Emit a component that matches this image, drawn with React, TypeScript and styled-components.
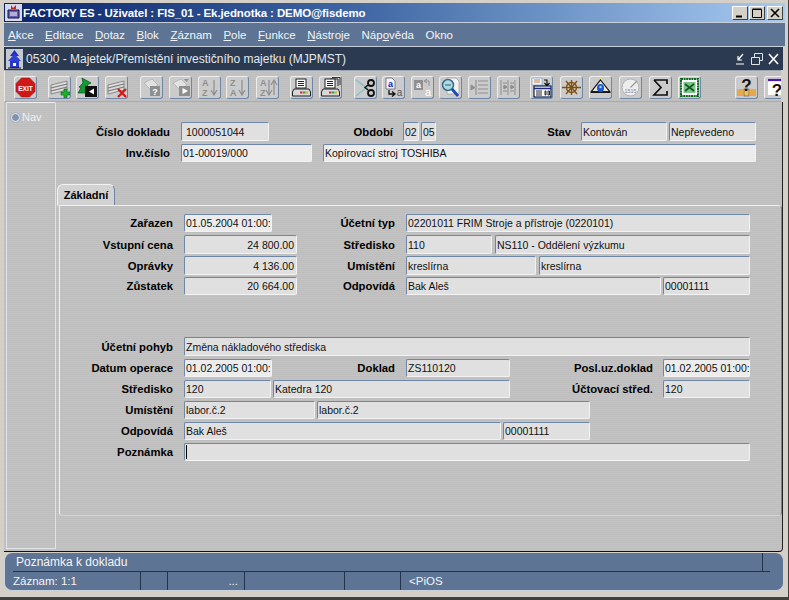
import React from "react";
import styled, { createGlobalStyle } from "styled-components";

const GlobalStyle = createGlobalStyle`
  html, body {
    margin: 0;
    padding: 0;
    background: #d4d0c8;
  }
  * {
    box-sizing: border-box;
  }
`;

const scanlines = `repeating-linear-gradient(0deg, #bebebe 0, #bebebe 1px, #c3c3c3 1px, #c3c3c3 2px)`;

const AppWindow = styled.div`
  width: 789px;
  height: 600px;
  overflow: hidden;
  display: flex;
  flex-direction: column;
  padding: 3px 5px 0 4px;
  background: #d4d0c8;
  border-right: 1px solid #404040;
  border-bottom: 3px solid #404040;
  font-family: "Liberation Sans", Arial, sans-serif;
`;

const TitleBar = styled.div`
  height: 19px;
  margin-right: -2px;
  display: flex;
  align-items: center;
  padding-left: 1px;
  background: linear-gradient(90deg, #0a246a 0%, #3f66a3 45%, #a6caf0 100%);
  flex: none;
`;

const AppIcon = styled.svg`
  width: 17px;
  height: 17px;
  flex: none;
`;

const TitleText = styled.div`
  margin-left: 1px;
  color: #fff;
  font-size: 11.5px;
  font-weight: 700;
  letter-spacing: -0.1px;
  white-space: nowrap;
  flex: 1;
`;

const WinButton = styled.div`
  width: 16px;
  height: 14px;
  margin-right: 1px;
  background: #d4d0c8;
  border: 1px solid;
  border-color: #fff #404040 #404040 #fff;
  display: flex;
  align-items: center;
  justify-content: center;
`;

const MenuBar = styled.div`
  height: 25px;
  margin-right: -2px;
  flex: none;
  display: flex;
  align-items: center;
  padding-left: 4px;
  gap: 11.5px;
  background: #5d7494;
  border-top: 1px solid #c6cfda;
  border-bottom: 1px solid #c6cfda;
`;

const MenuItem = styled.span`
  color: #f2f4f7;
  font-size: 11.5px;
  white-space: nowrap;

  u {
    text-decoration-thickness: 1px;
    text-underline-offset: 1px;
  }
`;

const InnerTitle = styled.div`
  height: 23px;
  flex: none;
  display: flex;
  align-items: center;
  padding-left: 2px;
  background: #2b3a50;
`;

const InnerTitleText = styled.div`
  margin-left: 3px;
  color: #e4e8ee;
  font-size: 12px;
  white-space: nowrap;
  flex: 1;
`;

const InnerControls = styled.svg`
  width: 44px;
  height: 14px;
  margin-right: 4px;
  flex: none;
`;

const Toolbar = styled.div`
  height: 32px;
  width: 777px;
  flex: none;
  display: flex;
  align-items: flex-start;
  padding: 5px 0 0 9px;
  overflow: hidden;
  background: ${scanlines};
  border-left: 1px solid #e6e6e6;
  border-top: 1px solid #9aa4b0;
  border-bottom: 1px solid #9fb0c4;
`;

const ToolButton = styled.div<{ $ml: number }>`
  width: 23px;
  height: 23px;
  flex: none;
  margin-left: ${(p) => p.$ml}px;
  background: #cbcbcb;
  border: 1px solid;
  border-color: #ececec #6e87a6 #6e87a6 #ececec;
  border-radius: 3px;
  display: flex;
  align-items: center;
  justify-content: center;

  svg {
    width: 21px;
    height: 21px;
    display: block;
  }
`;

const Body = styled.div`
  height: 450px;
  flex: none;
  display: flex;
  background: ${scanlines};
  border-bottom: 1px solid #111;
  border-right: 1px solid #222;
  border-bottom-right-radius: 4px;
`;

const NavColumn = styled.div`
  width: 50px;
  height: 447px;
  margin-left: 2px;
  flex: none;
  display: flex;
  align-items: flex-start;
  gap: 2px;
  padding: 8px 0 0 4px;
  border: 1px solid #dfe3e8;
  border-top-color: #eef0f3;
  border-radius: 2px 2px 0 0;
  color: #eef0f2;
  font-size: 11px;
`;

const NavRadio = styled.span`
  width: 9px;
  height: 9px;
  margin-top: 2px;
  border-radius: 50%;
  background: #7f92ae;
  border: 1px solid #e8edf2;
  box-shadow: 0 0 0 1px #a7b3c2;
`;

const Content = styled.div`
  flex: 1;
  display: flex;
  flex-direction: column;
  padding: 20px 0 0 1px;
`;

const Row = styled.div<{ $h: number; $mt: number }>`
  height: ${(p) => p.$h}px;
  margin-top: ${(p) => p.$mt}px;
  flex: none;
  display: flex;
  align-items: stretch;
`;

const Label = styled.div<{ $w: number }>`
  width: ${(p) => p.$w}px;
  flex: none;
  display: flex;
  align-items: center;
  justify-content: flex-end;
  color: #000;
  font-size: 11.3px;
  font-weight: 700;
  white-space: nowrap;
`;

const Field = styled.div<{ $w: number; $ml: number; $right?: boolean; $light?: boolean; $inset?: boolean }>`
  width: ${(p) => p.$w}px;
  margin-left: ${(p) => p.$ml}px;
  flex: none;
  display: flex;
  align-items: center;
  justify-content: ${(p) => (p.$right ? "flex-end" : "flex-start")};
  padding: 0 ${(p) => (p.$right ? 2 : 0)}px 0 ${(p) => (p.$inset ? 4 : 1)}px;
  overflow: hidden;
  background: ${(p) => (p.$light ? "#ececec" : "#e0e0e0")};
  border: 1px solid;
  border-color: #6e87a6 #f2f2f2 #f2f2f2 #6e87a6;
  border-radius: 2px;
  color: #111;
  font-size: 10.5px;
  white-space: nowrap;
`;

const Caret = styled.span`
  width: 1px;
  height: 14px;
  background: #000;
`;

const TabStrip = styled.div`
  margin-top: 22px;
  height: 22px;
  flex: none;
  display: flex;
`;

const Tab = styled.div`
  width: 58px;
  height: 22px;
  display: flex;
  align-items: center;
  justify-content: center;
  background: #d2d2d2;
  border: 1px solid;
  border-color: #f2f2f2 #6e87a6 transparent #f2f2f2;
  border-radius: 6px 6px 0 0;
  font-size: 11px;
  font-weight: 700;
`;

const TabPanel = styled.div`
  width: 723px;
  height: 311px;
  margin-left: 2px;
  margin-top: -1px;
  flex: none;
  padding-top: 8px;
  background: ${scanlines};
  border: 1px solid;
  border-color: #f2f2f2 #6e87a6 #cfd6df #f2f2f2;
  border-radius: 0 4px 4px 4px;
`;

const StatusArea = styled.div`
  height: 38px;
  margin: 1px -1px 0 0;
  flex: none;
  display: flex;
  flex-direction: column;
  padding: 0 13px 0 8px;
  background: #5d7494;
  border: 1px solid #c9d2dd;
  border-top: none;
  border-radius: 8px;
  color: #f3f5f8;
  font-size: 12px;
`;

const HintRow = styled.div`
  height: 19px;
  flex: none;
  display: flex;
  align-items: center;
  justify-content: space-between;
  padding: 0 7px 0 3px;
  border-bottom: 1px solid #24344c;
`;

const HintDivider = styled.span`
  width: 1px;
  height: 18px;
  background: #24344c;
`;

const StatusRow = styled.div`
  height: 18px;
  flex: none;
  font-size: 11.5px;
  display: flex;
`;

const StatusCell = styled.div<{ $w: number; $right?: boolean }>`
  width: ${(p) => p.$w}px;
  flex: none;
  display: flex;
  align-items: center;
  justify-content: ${(p) => (p.$right ? "flex-end" : "flex-start")};
  padding-right: ${(p) => (p.$right ? 6 : 0)}px;
  border-right: 1px solid #24344c;
  white-space: nowrap;
`;

const StatusText = styled.div`
  margin-left: 8px;
  display: flex;
  align-items: center;
`;

const Grey = "#8f8f8f";
const LightGrey = "#e2e2e2";

const Stripes = () => (
  <g>
    <path d="M2 8 L18 4 V13 L2 17 Z" fill="#dcdcdc" stroke="#6a6a6a" strokeWidth="0.7" />
    <path d="M2 11 L18 7 M2 14 L18 10" stroke="#777" strokeWidth="1.2" />
  </g>
);

const SortLetters = ({ a, b }: { a: string; b: string }) => (
  <g fill={Grey} fontFamily="Liberation Sans" fontSize="9" fontWeight="700">
    <text x="3" y="9">{a}</text>
    <text x="3" y="19">{b}</text>
  </g>
);

const DownArrow = ({ x }: { x: number }) => (
  <path d={`M${x} 3 V17 M${x - 3} 13 L${x} 18 L${x + 3} 13`} stroke={Grey} strokeWidth="1.2" fill="none" />
);

const Printer = ({ stack }: { stack?: boolean }) => (
  <g>
    {stack && <path d="M10 2 H18 V9 M12 0.5 H20 V8" fill="none" stroke="#333" strokeWidth="1" />}
    <rect x="5" y="2" width="10" height="9" fill="#fff" stroke="#222" />
    <path d="M7 4.5 H13 M7 6.5 H13 M7 8.5 H13" stroke="#1414b4" />
    <path d="M3 12 H18 L19.5 15 V19 H1.5 V15 Z" fill="#d8d8d8" stroke="#222" />
    <rect x="9" y="14.5" width="2.5" height="2" fill="#d03030" />
    <rect x="12" y="14.5" width="2.5" height="2" fill="#30a040" />
    <rect x="15" y="14.5" width="2" height="2" fill="#d8b020" />
  </g>
);

const Lines = ({ double }: { double?: boolean }) => (
  <g stroke={Grey} fill="none">
    {double ? (
      <>
        <path d="M3 3 V18 M10 3 V18 M17 3 V18" />
        <path d="M5 6 H9 M5 10 H9 M5 14 H9 M12 6 H16 M12 10 H16 M12 14 H16" />
        <path d="M6 8 L9 10 L6 12 Z M13 8 L16 10 L13 12 Z" fill={Grey} />
      </>
    ) : (
      <>
        <path d="M7 3 V18 M9 4 H19 M9 8 H19 M9 12 H19 M9 16 H19" strokeWidth="1.1" />
        <path d="M2 8 L6 10.5 L2 13 Z" fill={Grey} />
      </>
    )}
  </g>
);

type Tool = { ml: number; icon: React.ReactNode };

const tools: Tool[] = [
  {
    ml: 0,
    icon: (
      <g>
        <path d="M6.5 1 H14.5 L20 6.5 V14.5 L14.5 20 H6.5 L1 14.5 V6.5 Z" fill="#d01818" stroke="#9a1010" strokeWidth="0.6" />
        <text x="10.5" y="13.5" textAnchor="middle" fill="#fff" fontFamily="Liberation Sans" fontSize="6.6" fontWeight="700">EXIT</text>
      </g>
    ),
  },
  {
    ml: 11,
    icon: (
      <g>
        <Stripes />
        <path d="M12 15 H15 V12 H18 V15 H21 V18 H18 V21 H15 V18 H12 Z" fill="#20b030" stroke="#0b5a14" strokeWidth="0.6" />
      </g>
    ),
  },
  {
    ml: 5,
    icon: (
      <g>
        <path d="M5 1 L14 6 L10 8 L13 11 L9 12 L11 16 H1 L4 11 L2 10 L6 6 Z" fill="#129a35" stroke="#064d18" strokeWidth="0.7" />
        <rect x="8" y="9" width="12" height="11" fill="#111" />
        <path d="M17 11.5 V17.5 L12 14.5 Z" fill="#fff" />
      </g>
    ),
  },
  {
    ml: 6,
    icon: (
      <g>
        <Stripes />
        <path d="M12 12 L20 20 M20 12 L12 20" stroke="#d81818" strokeWidth="2.4" />
      </g>
    ),
  },
  {
    ml: 12,
    icon: (
      <g>
        <path d="M3 6 L11 2 L17 8 L10 13 Z" fill={LightGrey} stroke="#aaa" strokeWidth="0.7" />
        <rect x="9" y="9" width="10" height="10" fill={Grey} />
        <text x="14" y="17.5" textAnchor="middle" fill="#fff" fontFamily="Liberation Sans" fontSize="9" fontWeight="700">?</text>
      </g>
    ),
  },
  {
    ml: 6,
    icon: (
      <g>
        <path d="M3 6 L11 2 L17 8 L10 13 Z" fill={LightGrey} stroke="#aaa" strokeWidth="0.7" />
        <path d="M14 2 H19 L16.5 5 Z" fill={Grey} />
        <rect x="9" y="9" width="11" height="10" fill={Grey} />
        <path d="M12.5 11 V17 L18 14 Z" fill="#fff" />
      </g>
    ),
  },
  { ml: 6, icon: <g><SortLetters a="A" b="Z" /><DownArrow x={15} /></g> },
  { ml: 5, icon: <g><SortLetters a="Z" b="A" /><DownArrow x={15} /></g> },
  {
    ml: 7,
    icon: (
      <g>
        <SortLetters a="A" b="Z" />
        <DownArrow x={12} />
        <path d="M17 18 V4 M14 8 L17 3 L20 8" stroke={Grey} strokeWidth="1.2" fill="none" />
      </g>
    ),
  },
  { ml: 11, icon: <Printer /> },
  { ml: 6, icon: <Printer stack /> },
  {
    ml: 12,
    icon: (
      <g>
        <path d="M1 3 L13 12 M1 19 L13 9" stroke="#8fc0c8" strokeWidth="1.6" />
        <circle cx="16" cy="6" r="3" fill="none" stroke="#111" strokeWidth="1.8" />
        <circle cx="16" cy="16" r="3" fill="none" stroke="#111" strokeWidth="1.8" />
        <path d="M13 8 L10 10.5 L13 13" stroke="#111" strokeWidth="1.4" fill="none" />
      </g>
    ),
  },
  {
    ml: 5,
    icon: (
      <g>
        <path d="M3 1 H9 L12 4 V12 H3 Z" fill="#f4f4f4" stroke="#555" strokeWidth="0.7" />
        <text x="7.5" y="10" textAnchor="middle" fill="#1414d0" fontFamily="Liberation Sans" fontSize="9" fontWeight="700">a</text>
        <path d="M6 13 V17 H11 M9 14.5 L12 17 L9 19.5" stroke="#111" strokeWidth="1.3" fill="none" />
        <text x="16.5" y="19" textAnchor="middle" fill="#555" fontFamily="Liberation Sans" fontSize="10">a</text>
      </g>
    ),
  },
  {
    ml: 6,
    icon: (
      <g>
        <rect x="2" y="3" width="9" height="10" fill={Grey} />
        <text x="6.5" y="11" textAnchor="middle" fill="#fff" fontFamily="Liberation Sans" fontSize="9" fontWeight="700">a</text>
        <path d="M17 9 V4 H13 M15 2 L12 4 L15 6" stroke={Grey} fill="none" />
        <text x="16" y="19" textAnchor="middle" fill="#fff" fontFamily="Liberation Sans" fontSize="11">a</text>
      </g>
    ),
  },
  {
    ml: 5,
    icon: (
      <g>
        <path d="M7 1 H16 L19 4 V17 H7 Z" fill="#f2f2f2" stroke="#999" strokeWidth="0.7" />
        <circle cx="8" cy="8" r="5.5" fill="#a8dce4" stroke="#3a6a8a" strokeWidth="1.5" />
        <path d="M5 8 H11" stroke="#555" />
        <path d="M12 12 L18 19" stroke="#1a48c0" strokeWidth="2.8" />
      </g>
    ),
  },
  { ml: 6, icon: <Lines /> },
  { ml: 6, icon: <Lines double /> },
  {
    ml: 10,
    icon: (
      <g>
        <rect x="1" y="1" width="10" height="7" fill="#eef4fb" stroke="#8aa0c0" strokeWidth="0.7" />
        <path d="M3 3 H9 M3 5 H9" stroke="#d08040" />
        <path d="M13 3 H16 V8 M13.5 6 L16 9 L18.5 6" stroke="#111" strokeWidth="1.2" fill="none" />
        <rect x="3" y="9" width="17" height="11" fill="#fff" stroke="#10204a" strokeWidth="1.2" />
        <path d="M3 11.5 H20" stroke="#1a2a80" strokeWidth="1.6" />
        <path d="M5 14 H11 M5 16 H11 M5 18 H11 M14 14 H15 V18 H14 Z M17 14 H18.5 V18 H17 Z" stroke="#111" strokeWidth="0.9" fill="none" />
      </g>
    ),
  },
  {
    ml: 7,
    icon: (
      <g stroke="#80500f" fill="none" strokeWidth="1.3">
        <path d="M1 10.5 H20 M10.5 3 V18 M5 4 L16 17 M16 4 L5 17" />
        <circle cx="10.5" cy="10.5" r="5" />
      </g>
    ),
  },
  {
    ml: 6,
    icon: (
      <g>
        <path d="M3 5 L1 3 M18 5 L20 3 M10.5 2 V0" stroke="#e8e060" />
        <path d="M10.5 3 L20 15 H1 Z" fill="#e8e8d8" stroke="#111" strokeWidth="1.2" />
        <path d="M1 15 H20" stroke="#111" strokeWidth="1.8" />
        <ellipse cx="10.5" cy="11" rx="3.5" ry="4" fill="#1858d8" />
        <circle cx="10.5" cy="10" r="1.2" fill="#a8d8f8" />
      </g>
    ),
  },
  {
    ml: 7,
    icon: (
      <g>
        <circle cx="10.5" cy="10.5" r="8.5" fill="#ededed" stroke="#b0b0b0" />
        <path d="M10.5 10.5 L17 4" stroke="#9a9a9a" strokeWidth="1.2" />
        <text x="10.5" y="16" textAnchor="middle" fill="#888" fontFamily="Liberation Sans" fontSize="5.5">1515</text>
      </g>
    ),
  },
  {
    ml: 7,
    icon: <path d="M4 3 H17 V7 M4 3 L11 10.5 L4 18 H17 V14" fill="none" stroke="#111" strokeWidth="1.7" />,
  },
  {
    ml: 6,
    icon: (
      <g>
        <rect x="2" y="2" width="17" height="17" fill="#fff" stroke="#0c6a1c" strokeWidth="2" strokeDasharray="2 0.6" />
        <rect x="4.5" y="5" width="12" height="11" fill="#7ac48a" />
        <path d="M6 7 L15 14 M15 7 L6 14" stroke="#0c5a1c" strokeWidth="1.7" />
      </g>
    ),
  },
  {
    ml: 34,
    icon: (
      <g>
        <rect x="1" y="12" width="6" height="7" fill="#e8a850" />
        <rect x="14" y="12" width="6" height="7" fill="#e8a850" />
        <rect x="8" y="12" width="5" height="7" fill="#f0c060" stroke="#333" strokeWidth="0.5" />
        <text x="10.5" y="14" textAnchor="middle" fill="#111" fontFamily="Liberation Sans" fontSize="17" fontWeight="700">?</text>
      </g>
    ),
  },
  {
    ml: 6,
    icon: (
      <g>
        <rect x="3" y="3" width="18" height="15" fill="#fff" />
        <path d="M3 3 H21" stroke="#4a18b8" strokeWidth="2.2" />
        <text x="12" y="18.5" textAnchor="middle" fill="#111" fontFamily="Liberation Sans" fontSize="17" fontWeight="700">?</text>
      </g>
    ),
  },
];

const menus: [string, string, string][] = [
  ["", "A", "kce"],
  ["", "E", "ditace"],
  ["", "D", "otaz"],
  ["", "B", "lok"],
  ["", "Z", "áznam"],
  ["", "P", "ole"],
  ["", "F", "unkce"],
  ["", "N", "ástroje"],
  ["Náp", "o", "věda"],
  ["", "", "Okno"],
];

export default function App() {
  return (
    <AppWindow>
      <GlobalStyle />
      <TitleBar>
        <AppIcon viewBox="0 0 17 17">
          <rect width="17" height="17" fill="#d8d8ec" />
          <path d="M3 6 H14 V14 H3 Z" fill="#6060b0" stroke="#101040" />
          <path d="M5 9 H12 M5 11 H12" stroke="#fff" />
          <path d="M6 1 L8 4 L11 1 V5 H6 Z" fill="#d02020" />
        </AppIcon>
        <TitleText>FACTORY ES - Uživatel : FIS_01 - Ek.jednotka : DEMO@fisdemo</TitleText>
        <WinButton>
          <svg width="10" height="10" viewBox="0 0 10 10"><path d="M1 8.5 H7" stroke="#000" strokeWidth="2" /></svg>
        </WinButton>
        <WinButton>
          <svg width="10" height="10" viewBox="0 0 10 10"><path d="M0.5 1.5 H9.5 V9.5 H0.5 Z M0.5 1 H9.5" stroke="#000" fill="none" /></svg>
        </WinButton>
        <WinButton style={{ marginLeft: 1, marginRight: 2 }}>
          <svg width="10" height="10" viewBox="0 0 10 10"><path d="M1 1 L9 9 M9 1 L1 9" stroke="#000" strokeWidth="1.6" /></svg>
        </WinButton>
      </TitleBar>
      <MenuBar>
        {menus.map(([pre, key, rest]) => (
          <MenuItem key={pre + key + rest}>
            {pre}
            {key && <u>{key}</u>}
            {rest}
          </MenuItem>
        ))}
      </MenuBar>
      <InnerTitle>
        <AppIcon viewBox="0 0 17 20" style={{ height: 20 }}>
          <rect width="17" height="20" fill="#c4c8cf" />
          <path d="M8.5 1 L13 7 H4 Z" fill="#2030c0" />
          <path d="M8.5 5 L15 12 H2 Z" fill="#3040d0" />
          <rect x="4" y="12" width="9" height="7" fill="#2838c8" />
          <rect x="7" y="14" width="3" height="3" fill="#fff" />
          <path d="M2 19 H15" stroke="#111" />
        </AppIcon>
        <InnerTitleText>05300 - Majetek/Přemístění investičního majetku (MJPMST)</InnerTitleText>
        <InnerControls viewBox="0 0 44 14">
          <path d="M1 12 H9 M8 2 L3 8 M3 4 V8 H7" stroke="#fff" strokeWidth="1.2" fill="none" />
          <path d="M16.5 5.5 H24.5 V12.5 H16.5 Z M19.5 5 V1.5 H27.5 V8.5 H25" stroke="#dfe3e8" fill="none" />
          <path d="M34 2 L43 12 M43 2 L34 12" stroke="#fff" strokeWidth="1.6" />
        </InnerControls>
      </InnerTitle>
      <Toolbar>
        {tools.map((tool, i) => (
          <ToolButton key={i} $ml={tool.ml}>
            <svg viewBox="0 0 21 21">{tool.icon}</svg>
          </ToolButton>
        ))}
      </Toolbar>
      <Body>
        <NavColumn>
          <NavRadio />
          <span>Nav</span>
        </NavColumn>
        <Content>
          <Row $h={19} $mt={0}>
            <Label $w={113}>Číslo dokladu</Label>
            <Field $w={88} $ml={11} $inset>1000051044</Field>
            <Label $w={124}>Období</Label>
            <Field $w={16} $ml={10}>02</Field>
            <Field $w={15} $ml={2}>05</Field>
            <Label $w={135}>Stav</Label>
            <Field $w={86} $ml={10}>Kontován</Field>
            <Field $w={87} $ml={2}>Nepřevedeno</Field>
          </Row>
          <Row $h={18} $mt={3}>
            <Label $w={113}>Inv.číslo</Label>
            <Field $w={131} $ml={11} $light>01-00019/000</Field>
            <Field $w={433} $ml={11} $light>Kopírovací stroj TOSHIBA</Field>
          </Row>
          <TabStrip>
            <Tab>Základní</Tab>
          </TabStrip>
          <TabPanel>
            <Row $h={18} $mt={0}>
              <Label $w={113}>Zařazen</Label>
              <Field $w={88} $ml={11} $light>01.05.2004 01:00:</Field>
              <Label $w={123}>Účetní typ</Label>
              <Field $w={344} $ml={11}>02201011 FRIM Stroje a přístroje (0220101)</Field>
            </Row>
            <Row $h={19} $mt={3}>
              <Label $w={113}>Vstupní cena</Label>
              <Field $w={113} $ml={11} $right>24 800.00</Field>
              <Label $w={98}>Středisko</Label>
              <Field $w={86} $ml={11}>110</Field>
              <Field $w={255} $ml={3}>NS110 - Oddělení výzkumu</Field>
            </Row>
            <Row $h={19} $mt={2}>
              <Label $w={113}>Oprávky</Label>
              <Field $w={113} $ml={11} $right>4 136.00</Field>
              <Label $w={98}>Umístění</Label>
              <Field $w={130} $ml={11}>kreslírna</Field>
              <Field $w={211} $ml={3}>kreslírna</Field>
            </Row>
            <Row $h={18} $mt={2}>
              <Label $w={113}>Zůstatek</Label>
              <Field $w={113} $ml={11} $right>20 664.00</Field>
              <Label $w={98}>Odpovídá</Label>
              <Field $w={255} $ml={11}>Bak Aleš</Field>
              <Field $w={87} $ml={2}>00001111</Field>
            </Row>
            <Row $h={19} $mt={42}>
              <Label $w={113}>Účetní pohyb</Label>
              <Field $w={566} $ml={11}>Změna nákladového střediska</Field>
            </Row>
            <Row $h={18} $mt={3}>
              <Label $w={113}>Datum operace</Label>
              <Field $w={88} $ml={11} $light>01.02.2005 01:00:</Field>
              <Label $w={123}>Doklad</Label>
              <Field $w={104} $ml={11}>ZS110120</Field>
              <Label $w={143}>Posl.uz.doklad</Label>
              <Field $w={87} $ml={10} $light>01.02.2005 01:00:</Field>
            </Row>
            <Row $h={18} $mt={3}>
              <Label $w={113}>Středisko</Label>
              <Field $w={87} $ml={11}>120</Field>
              <Field $w={237} $ml={2}>Katedra 120</Field>
              <Label $w={143}>Účtovací střed.</Label>
              <Field $w={87} $ml={10}>120</Field>
            </Row>
            <Row $h={18} $mt={3}>
              <Label $w={113}>Umístění</Label>
              <Field $w={131} $ml={11}>labor.č.2</Field>
              <Field $w={273} $ml={2}>labor.č.2</Field>
            </Row>
            <Row $h={18} $mt={3}>
              <Label $w={113}>Odpovídá</Label>
              <Field $w={317} $ml={11}>Bak Aleš</Field>
              <Field $w={87} $ml={2}>00001111</Field>
            </Row>
            <Row $h={18} $mt={3}>
              <Label $w={113}>Poznámka</Label>
              <Field $w={566} $ml={11}><Caret /></Field>
            </Row>
          </TabPanel>
        </Content>
      </Body>
      <StatusArea>
        <HintRow>
          <span>Poznámka k dokladu</span>
          <HintDivider />
        </HintRow>
        <StatusRow>
          <StatusCell $w={128}>Záznam: 1:1</StatusCell>
          <StatusCell $w={27} />
          <StatusCell $w={77} $right>...</StatusCell>
          <StatusCell $w={100} />
          <StatusCell $w={56} />
          <StatusText>&lt;PiOS</StatusText>
        </StatusRow>
      </StatusArea>
    </AppWindow>
  );
}
